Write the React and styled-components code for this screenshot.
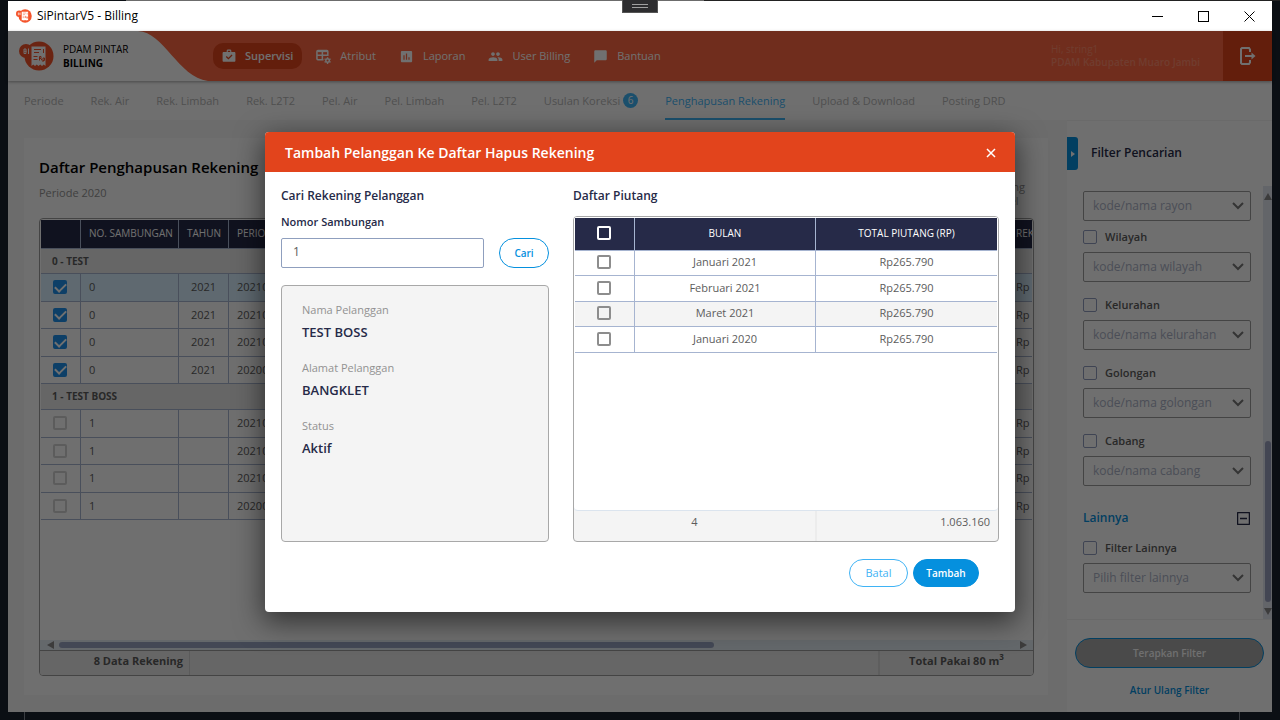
import React from "react";
import styled, { createGlobalStyle, css } from "styled-components";
import { MdPoll, MdPeople, MdChatBubble } from "react-icons/md";

const c = {
  navy: "#262a48",
  blue: "#0590de",
  sky: "#3fb3f5",
  orange: "#ff6842",
  deep: "#e2441c",
  line: "#a6b4d0",
  text: "#5c5c5c",
  muted: "#929292",
};

const Global = createGlobalStyle`
  * { box-sizing: border-box; }
  body { margin: 0; background: #0b0f14; font-family: "Open Sans", "Noto Sans", sans-serif; font-size: 12px; line-height: 16px; color: ${c.text}; }
  button, input, select { font: inherit; color: inherit; margin: 0; }
  h1, h2, h3, p, dl, dd { margin: 0; }
`;

/* Desktop and window frame */
const Desktop = styled.div`
  min-height: 100vh;
  display: flex;
  flex-direction: column;
  padding: 0 8px;
`;
const TopEdge = styled.div`
  height: 1px;
  margin: 0 -8px;
  background: linear-gradient(90deg, #0b0f14 126px, #6c6c6c 126px, #6c6c6c 55%, #222 55%);
`;
const BottomEdge = styled.div`
  height: 8px;
  margin: 0 32px 0 16px;
  border: solid #3a3d42;
  border-width: 0 1px;
`;
const DebugTab = styled.div`
  position: absolute;
  top: 0;
  left: 50%;
  width: 36px;
  height: 13px;
  margin-left: -18px;
  background: #2d2d2f;
  border: 1px solid #555;
  border-top: 0;
  display: flex;
  flex-direction: column;
  align-items: center;
  justify-content: center;
  gap: 2px;
  span { width: 16px; height: 1px; background: #a0a0a0; }
`;
const Window = styled.div`
  flex: 1;
  display: flex;
  flex-direction: column;
  background: #fff;
`;
const TitleBar = styled.div`
  height: 30px;
  display: flex;
  align-items: center;
  padding: 0 0 0 8px;
  gap: 5px;
  font-size: 12px;
  color: #000;
`;
const TitleText = styled.span`
  flex: 1;
`;
const WinButtons = styled.div`
  display: flex;
`;
const WinButton = styled.button`
  width: 46px;
  height: 30px;
  border: 0;
  padding: 0;
  background: none;
  display: grid;
  place-items: center;
`;
const Client = styled.div`
  position: relative;
  flex: 1;
  display: flex;
  flex-direction: column;
`;

/* Header */
const Header = styled.header`
  height: 50px;
  display: flex;
  background: ${c.orange};
  box-shadow: 0 1px 3px rgba(0, 0, 0, 0.35);
  z-index: 1;
`;
const Brand = styled.div`
  width: 130px;
  display: flex;
  align-items: center;
  gap: 9px;
  padding-left: 11px;
  background: #fff;
  color: #000;
  font-size: 10px;
  line-height: 14px;
`;
const Wave = styled.svg`
  width: 70px;
  height: 50px;
  margin-right: 5px;
`;
const Nav = styled.nav`
  flex: 1;
  display: flex;
  align-items: center;
  gap: 5px;
`;
const NavLink = styled.a`
  height: 26px;
  display: flex;
  align-items: center;
  gap: 9px;
  padding: 0 9px;
  border-radius: 10px;
  color: #fff;
  text-decoration: none;
  font-size: 11px;
  background: ${(p) => (p.$active ? c.deep : "none")};
  font-weight: ${(p) => (p.$active ? 600 : 400)};
`;
const Greeting = styled.div`
  width: 172px;
  align-self: center;
  font-size: 10px;
  line-height: 13px;
  color: #ff8a6c;
  strong { font-weight: 600; }
`;
const Logout = styled.button`
  width: 49px;
  border: 0;
  padding: 0;
  background: ${c.deep};
  color: #fff;
  display: grid;
  place-items: center;
`;

/* Tabs */
const Tabs = styled.nav`
  height: 39px;
  display: flex;
  gap: 27px;
  padding-left: 16px;
  background: #fdfdfd;
`;
const Tab = styled.a`
  display: flex;
  align-items: center;
  gap: 3px;
  font-size: 11px;
  text-decoration: none;
  white-space: nowrap;
  color: ${(p) => (p.$active ? c.sky : "#b4b4b4")};
  border-top: 2px solid transparent;
  border-bottom: 2px solid ${(p) => (p.$active ? c.sky : "transparent")};
`;
const Badge = styled.span`
  width: 15px;
  height: 15px;
  border-radius: 50%;
  background: ${c.sky};
  color: #fff;
  font-size: 10px;
  line-height: 15px;
  text-align: center;
`;

/* Main page */
const Body = styled.div`
  flex: 1;
  display: flex;
  background: #f5f5f5;
`;
const Main = styled.main`
  flex: 1;
  min-width: 0;
  display: flex;
  padding: 18px 19px 17px 16px;
`;
const Card = styled.section`
  flex: 1;
  min-width: 0;
  display: flex;
  flex-direction: column;
  background: #fdfdfd;
  padding: 19px 14px 19px 15px;
`;
const CardHead = styled.div`
  height: 61px;
  display: flex;
  justify-content: space-between;
`;
const PageTitle = styled.h1`
  font-size: 15px;
  line-height: 20px;
  font-weight: 600;
  color: #000;
`;
const Subtitle = styled.p`
  margin-top: 8px;
  font-size: 11px;
  color: ${c.muted};
`;
const ToolButton = styled.button`
  align-self: flex-end;
  border: 0;
  background: none;
  padding: 0 9px 10px;
  font-size: 11px;
  line-height: 14px;
  color: ${c.muted};
`;
const Grid = styled.div`
  flex: 1;
  display: flex;
  flex-direction: column;
  border: 1px solid #9c9c9c;
  border-radius: 4px;
  overflow: hidden;
  background: #fdfdfd;
`;
const GridView = styled.div`
  flex: 1;
  padding: 1px 1px 0;
`;
const RekTable = styled.table`
  width: 100%;
  table-layout: fixed;
  border-collapse: separate;
  border-spacing: 0;
  font-size: 11px;
  th, td {
    padding: 0 8px 1px;
    border-right: 1px solid ${c.line};
    border-bottom: 1px solid ${c.line};
    overflow: hidden;
    white-space: nowrap;
    text-align: left;
  }
  th:last-child, td:last-child { border-right: 0; padding-right: 0; }
  thead th {
    height: 29px;
    padding-bottom: 2px;
    background: ${c.navy};
    color: #fff;
    font-size: 10px;
    font-weight: 400;
  }
  td { height: 27px; }
  tr:nth-child(even) td { height: 28px; }
  td:first-child { padding: 0 1px 1px 0; }
  td:nth-child(3) { text-align: center; }
`;
const GroupCell = styled.th`
  && {
    height: ${(p) => (p.$first ? 25 : 26)}px;
    padding-left: 11px;
    background: #e8e8e8;
    font-size: 10px;
    font-weight: 700;
  }
`;
const Row = styled.tr`
  background: ${(p) => (p.$selected ? "#d8f0ff" : "none")};
`;
const Check = styled.input.attrs({ type: "checkbox" })`
  && { margin: ${(p) => (p.$thin ? "0" : "0 auto")}; }
  appearance: none;
  display: grid;
  place-items: center;
  flex: none;
  width: 14px;
  height: 14px;
  border: ${(p) => (p.$thin ? 1 : 2)}px solid ${(p) => p.$color || "#8d8d8d"};
  border-radius: 2px;
  &:checked {
    background: #1e90ea;
    border-color: #1e90ea;
  }
  &:checked::after {
    content: "";
    width: 9px;
    height: 5px;
    border: solid #fff;
    border-width: 0 0 2px 2px;
    transform: translateY(-1px) rotate(-45deg);
  }
`;
const HScroll = styled.div`
  height: 10px;
  display: flex;
  align-items: center;
  padding: 0 6px 0 7px;
  gap: 5px;
  background: #e4edf4;
`;
const Track = styled.div`
  flex: 1;
`;
const HThumb = styled.div`
  width: 68.5%;
  height: 6px;
  border-radius: 3px;
  background: #9aa4c2;
`;
const Arrow = styled.span`
  width: 0;
  height: 0;
  border: 4px solid transparent;
  ${(p) => p.$dir === "left" && css`border-right: 7px solid #888; border-left: 0;`}
  ${(p) => p.$dir === "right" && css`border-left: 7px solid #888; border-right: 0;`}
  ${(p) => p.$dir === "up" && css`border-bottom: 7px solid #888; border-top: 0;`}
  ${(p) => p.$dir === "down" && css`border-top: 7px solid #888; border-bottom: 0;`}
`;
const GridFoot = styled.div`
  height: 25px;
  display: flex;
  justify-content: space-between;
  border-top: 1px solid #9c9c9c;
  background: #e9e9e9;
  font-size: 11px;
  font-weight: 700;
  line-height: 20px;
  sup { font-size: 8px; line-height: 8px; }
`;
const FootLeft = styled.span`
  width: 150px;
  padding-right: 6px;
  text-align: right;
  border-right: 1px solid #cfcfcf;
`;
const FootRight = styled.span`
  width: 155px;
  text-align: center;
  border-left: 2px solid #d6d6d6;
`;

/* Filter panel */
const Side = styled.aside`
  width: 205px;
  display: flex;
  flex-direction: column;
  background: #fdfdfd;
  border-top: 1px solid #f2f2f2;
`;
const SideHead = styled.div`
  height: 65px;
  padding-top: 16px;
  display: flex;
  gap: 13px;
`;
const Toggle = styled.button`
  width: 11px;
  height: 33px;
  border: 0;
  padding: 0;
  background: ${c.blue};
  border-radius: 0 3px 3px 0;
  display: grid;
  place-items: center;
`;
const SideTitle = styled.h2`
  font-size: 12px;
  line-height: 32px;
  font-weight: 600;
  color: ${c.navy};
`;
const SideScroll = styled.div`
  flex: 1;
  display: flex;
  border-bottom: 1px solid #efefef;
`;
const Fields = styled.div`
  flex: 1;
  padding: 5px 12px 0 16px;
`;
const Field = styled.div`
  display: flex;
  flex-direction: column;
  gap: 7px;
  margin-bottom: ${(p) => (p.$tight ? 8 : 15)}px;
`;
const CheckLabel = styled.label`
  height: 16px;
  display: flex;
  align-items: center;
  gap: 8px;
  font-size: 11px;
  font-weight: 600;
`;
const SelectBox = styled.div`
  display: grid;
  align-items: center;
  select, svg { grid-area: 1 / 1; }
  svg { justify-self: end; margin-right: 7px; pointer-events: none; }
`;
const Select = styled.select`
  appearance: none;
  width: 100%;
  height: 30px;
  padding: 0 9px;
  border: 1px solid #9c9c9c;
  border-radius: 2px;
  background: transparent;
  color: #abb2c6;
  font-size: 12px;
`;
const SectionHead = styled.div`
  height: 34px;
  margin-top: 14px;
  display: flex;
  align-items: center;
  justify-content: space-between;
  margin-bottom: 5px;
`;
const SectionTitle = styled.h3`
  font-size: 12px;
  font-weight: 600;
  color: ${c.blue};
`;
const IconButton = styled.button`
  border: 0;
  padding: 0 1px 0 0;
  background: none;
  display: grid;
  color: ${(p) => p.$color || "inherit"};
`;
const VScroll = styled.div`
  width: 9px;
  display: flex;
  flex-direction: column;
  align-items: center;
  justify-content: space-between;
  padding: 7px 0 4px;
  background: #e2e5f0;
`;
const VTrack = styled.div`
  flex: 1;
  display: flex;
  align-items: flex-end;
  padding-bottom: 6px;
`;
const VThumb = styled.div`
  width: 6px;
  height: 40%;
  border-radius: 3px;
  background: #9aa0bd;
`;
const SideFoot = styled.div`
  height: 92px;
  padding: 18px 8px 0;
  display: flex;
  flex-direction: column;
  align-items: center;
  gap: 14px;
  font-size: 10px;
  font-weight: 600;
`;
const Apply = styled.button`
  width: 100%;
  height: 30px;
  border: 1px solid ${c.blue};
  border-radius: 15px;
  background: #a8a8a8;
  color: #fdfdfd;
`;
const Reset = styled.a`
  color: ${c.blue};
  text-decoration: none;
`;

/* Dialog */
const Overlay = styled.div`
  position: absolute;
  inset: 0;
  z-index: 2;
  display: grid;
  place-items: center;
  background: rgba(0, 0, 0, 0.56);
`;
const Dialog = styled.div`
  width: 750px;
  max-width: 100%;
  border-radius: 4px;
  background: #fff;
  overflow: hidden;
  box-shadow: 0 8px 28px 2px rgba(0, 0, 0, 0.55);
  color: ${c.navy};
`;
const DialogHead = styled.div`
  height: 40px;
  padding: 2px 18px 0 20px;
  display: flex;
  align-items: center;
  justify-content: space-between;
  background: ${c.deep};
  color: #fff;
`;
const DialogTitle = styled.h2`
  font-size: 14px;
  line-height: 20px;
  font-weight: 600;
`;
const DialogBody = styled.div`
  padding: 15px 16px 0;
  display: grid;
  grid-template-columns: 268fr 426fr;
  gap: 24px;
`;
const Column = styled.div`
  display: flex;
  flex-direction: column;
`;
const Heading = styled.h3`
  font-size: 12px;
  line-height: 18px;
  font-weight: 600;
`;
const SearchLabel = styled.label`
  margin: 9px 0;
  font-size: 11px;
  line-height: 15px;
  font-weight: 600;
`;
const SearchRow = styled.div`
  display: flex;
  gap: 15px;
  margin-bottom: 17px;
`;
const TextBox = styled.input`
  flex: 1;
  min-width: 0;
  height: 30px;
  padding: 0 11px 2px;
  border: 1px solid #8f9fbe;
  border-radius: 2px;
  color: ${c.text};
`;
const Pill = styled.button`
  height: ${(p) => (p.$search ? 30 : 28)}px;
  width: ${(p) => p.$w}px;
  padding: 0;
  border-radius: 15px;
  border: 1px solid ${(p) => p.$color};
  background: ${(p) => (p.$solid ? p.$color : "#fff")};
  color: ${(p) => (p.$solid ? "#fff" : p.$color)};
  font-size: ${(p) => (p.$large ? 11 : 10)}px;
  font-weight: ${(p) => (p.$large ? 400 : 600)};
`;
const Info = styled.dl`
  flex: 1;
  padding: 16px 20px;
  border: 1px solid #a8a8a8;
  border-radius: 4px;
  background: #f4f4f4;
  dt { font-size: 11px; line-height: 16px; color: ${c.muted}; }
  dd { font-size: 13px; line-height: 18px; font-weight: 600; margin: 5px 0 19px; }
`;
const DebtBox = styled.div`
  height: 326px;
  margin-top: 11px;
  display: flex;
  flex-direction: column;
  border: 1px solid #a8a8a8;
  border-radius: 4px;
  background: #f4f4f4;
  overflow: hidden;
`;
const DebtView = styled.div`
  flex: 1;
  padding: 1px 1px 0;
  background: #fff;
  border-bottom: 1px solid #dbe4ee;
  border-radius: 0 0 4px 4px;
`;
const DebtTable = styled.table`
  width: 100%;
  table-layout: fixed;
  border-collapse: separate;
  border-spacing: 0;
  color: ${c.text};
  font-size: 11px;
  th, td {
    padding: 0 0 1px;
    text-align: center;
    border-bottom: 1px solid ${c.line};
    border-right: 1px solid ${c.line};
  }
  th:last-child, td:last-child { border-right: 0; }
  th:first-child, td:first-child { padding-right: 1px; }
  th {
    height: 33px;
    background: ${c.navy};
    color: #fff;
    font-size: 10px;
    font-weight: 400;
  }
  td { height: 25px; }
  tr:nth-child(even) td { height: 26px; }
`;
const DebtRow = styled.tr`
  background: ${(p) => (p.$shade ? "#f4f4f4" : "none")};
`;
const DebtFoot = styled.div`
  height: 30px;
  display: flex;
  color: ${c.text};
  font-size: 11px;
  line-height: 21px;
`;
const DebtCount = styled.span`
  width: 243px;
  text-align: center;
  border-right: 2px solid #ececec;
`;
const DebtSum = styled.span`
  flex: 1;
  padding-right: 8px;
  text-align: right;
`;
const Actions = styled.div`
  display: flex;
  justify-content: flex-end;
  gap: 5px;
  padding: 17px 36px 25px 0;
`;

const Logo = ({ w, h }) => (
  <svg width={w} height={h} viewBox="0 0 35 30" aria-hidden="true">
    <circle cx="20" cy="15" r="14.500" fill="#f4532a" />
    <circle cx="7" cy="10" r="7" fill="#f4532a" />
    <path d="M12.500 5.500h14v19.500l-1.750-1.500-1.750 1.500-1.750-1.500-1.750 1.500-1.750-1.500-1.750 1.500-1.750-1.500-1.750 1.500z" fill="#fff" />
    <path d="M15 8.500h7M15 11.500h5M24.500 8v4M14.500 15.500h4M14.500 18.500h4" stroke="#f4532a" strokeWidth="1" fill="none" />
    <path d="M20.500 19.500v-4h1.500v2h-1.500M22 17.500l1 2M24 21v-4h1.500v2.500H24" stroke="#f4532a" strokeWidth="1" fill="none" />
    <path d="M5 8h2v4.500H5zM5 10.250h2.500M9.500 7.500v5.500" stroke="#fff" strokeWidth="1" fill="none" />
  </svg>
);
const BagCheck = () => (
  <svg width="14" height="14" viewBox="0 0 24 24" aria-hidden="true">
    <path fill="currentColor" fillRule="evenodd" d="M8 5V3.500C8 2 9 1 10.500 1h3C15 1 16 2 16 3.500V5h5c1.200 0 2 .8 2 2v13c0 1.200-.8 2-2 2H3c-1.200 0-2-.8-2-2V7c0-1.200.8-2 2-2zm2 0h4V3h-4zm1 13 7-7-1.600-1.600L11 14.800l-2.900-2.900L6.500 13.500z" />
  </svg>
);
const TableCog = () => (
  <svg width="15" height="15" viewBox="0 0 24 24" aria-hidden="true">
    <path fill="none" stroke="currentColor" strokeWidth="2.400" d="M12 17H3c-.8 0-1.500-.6-1.500-1.400V3.900C1.500 3 2.200 2.500 3 2.500h14.500c.8 0 1.400.6 1.400 1.400V11M1.500 10h17.400M10.200 4v13" />
    <path fill="currentColor" d="M2 2h17v3H2z" />
    <circle cx="18.500" cy="18.500" r="2.800" fill="none" stroke="currentColor" strokeWidth="2.400" />
    <path d="M18.500 13v2M18.500 22v2M13.700 15.800l1.700 1M21.600 20.200l1.700 1M13.700 21.200l1.700-1M21.600 16.800l1.700-1" stroke="currentColor" strokeWidth="2.200" />
  </svg>
);
const Chevron = () => (
  <svg width="12" height="8" viewBox="0 0 12 8" fill="none" stroke="#777" strokeWidth="2" aria-hidden="true">
    <path d="M1 1l5 5 5-5" />
  </svg>
);

const NAV = [
  ["Supervisi", BagCheck],
  ["Atribut", TableCog],
  ["Laporan", MdPoll],
  ["User Billing", MdPeople],
  ["Bantuan", MdChatBubble],
];
const TABS = ["Periode", "Rek. Air", "Rek. Limbah", "Rek. L2T2", "Pel. Air", "Pel. Limbah", "Pel. L2T2", "Usulan Koreksi", "Penghapusan Rekening", "Upload & Download", "Posting DRD"];
const GROUPS = [
  { name: "0 - TEST", no: "0", year: "2021", checked: true, periods: ["202101", "202102", "202103", "202001"] },
  { name: "1 - TEST BOSS", no: "1", year: "", checked: false, periods: ["202101", "202102", "202103", "202001"] },
];
const FILTERS = ["Wilayah", "Kelurahan", "Golongan", "Cabang"];
const DEBTS = ["Januari 2021", "Februari 2021", "Maret 2021", "Januari 2020"];

function FilterSelect({ text }) {
  return (
    <SelectBox>
      <Select aria-label={text} defaultValue="">
        <option value="">{text}</option>
      </Select>
      <Chevron />
    </SelectBox>
  );
}

function FilterField({ label, placeholder }) {
  return (
    <Field>
      <CheckLabel>
        <Check $thin $color="#8f9bbd" />
        {label}
      </CheckLabel>
      <FilterSelect text={placeholder} />
    </Field>
  );
}

function RekeningTable() {
  return (
    <RekTable>
      <colgroup>
        <col style={{ width: 40 }} />
        <col style={{ width: 98 }} />
        <col style={{ width: 50 }} />
        <col />
        <col style={{ width: 24 }} />
      </colgroup>
      <thead>
        <tr>
          <th aria-label="Pilih" />
          <th>NO. SAMBUNGAN</th>
          <th>TAHUN</th>
          <th>PERIODE</th>
          <th>REK</th>
        </tr>
      </thead>
      {GROUPS.map((g, gi) => (
        <tbody key={g.name}>
          <tr>
            <GroupCell colSpan={5} $first={gi === 0}>{g.name}</GroupCell>
          </tr>
          {g.periods.map((p, i) => (
            <Row key={p} $selected={gi === 0 && i === 0}>
              <td>
                <Check aria-label={`${g.name} ${p}`} defaultChecked={g.checked} disabled={!g.checked} $color="#d2d2d2" />
              </td>
              <td>{g.no}</td>
              <td>{g.year}</td>
              <td>{p}</td>
              <td>Rp</td>
            </Row>
          ))}
        </tbody>
      ))}
    </RekTable>
  );
}

function AddDialog() {
  return (
    <Dialog role="dialog" aria-labelledby="dialog-title">
      <DialogHead>
        <DialogTitle id="dialog-title">Tambah Pelanggan Ke Daftar Hapus Rekening</DialogTitle>
        <IconButton aria-label="Tutup">
          <svg width="10" height="10" viewBox="0 0 10 10" stroke="currentColor" strokeWidth="1.500">
            <path d="M1 1l8 8M9 1L1 9" />
          </svg>
        </IconButton>
      </DialogHead>
      <DialogBody>
        <Column>
          <Heading>Cari Rekening Pelanggan</Heading>
          <SearchLabel htmlFor="nomor">Nomor Sambungan</SearchLabel>
          <SearchRow>
            <TextBox id="nomor" defaultValue="1" />
            <Pill $search $w={50} $color={c.blue}>Cari</Pill>
          </SearchRow>
          <Info>
            <dt>Nama Pelanggan</dt>
            <dd>TEST BOSS</dd>
            <dt>Alamat Pelanggan</dt>
            <dd>BANGKLET</dd>
            <dt>Status</dt>
            <dd>Aktif</dd>
          </Info>
        </Column>
        <Column>
          <Heading>Daftar Piutang</Heading>
          <DebtBox>
            <DebtView>
              <DebtTable>
                <colgroup>
                  <col style={{ width: 60 }} />
                  <col />
                  <col />
                </colgroup>
                <thead>
                  <tr>
                    <th><Check aria-label="Pilih semua" $color="#fff" /></th>
                    <th>BULAN</th>
                    <th>TOTAL PIUTANG (RP)</th>
                  </tr>
                </thead>
                <tbody>
                  {DEBTS.map((d, i) => (
                    <DebtRow key={d} $shade={i === 2}>
                      <td><Check aria-label={d} /></td>
                      <td>{d}</td>
                      <td>Rp265.790</td>
                    </DebtRow>
                  ))}
                </tbody>
              </DebtTable>
            </DebtView>
            <DebtFoot>
              <DebtCount>4</DebtCount>
              <DebtSum>1.063.160</DebtSum>
            </DebtFoot>
          </DebtBox>
        </Column>
      </DialogBody>
      <Actions>
        <Pill $w={59} $large $color={c.sky}>Batal</Pill>
        <Pill $w={66} $solid $color={c.blue}>Tambah</Pill>
      </Actions>
    </Dialog>
  );
}

export default function App() {
  return (
    <Desktop>
      <Global />
      <TopEdge />
      <Window>
        <TitleBar>
          <Logo w={16} h={14} />
          <TitleText>SiPintarV5 - Billing</TitleText>
          <WinButtons>
            <WinButton aria-label="Minimize">
              <svg width="11" height="11" stroke="#000"><path d="M0 5.500h11" /></svg>
            </WinButton>
            <WinButton aria-label="Maximize">
              <svg width="11" height="11" stroke="#000" fill="none"><rect x=".5" y=".5" width="10" height="10" /></svg>
            </WinButton>
            <WinButton aria-label="Close">
              <svg width="11" height="11" stroke="#000"><path d="M.5.5l10 10M10.500.5l-10 10" /></svg>
            </WinButton>
          </WinButtons>
        </TitleBar>
        <Client>
          <Header>
            <Brand>
              <Logo w={35} h={30} />
              <div>
                PDAM PINTAR
                <br />
                <b>BILLING</b>
              </div>
            </Brand>
            <Wave viewBox="0 0 70 50" aria-hidden="true">
              <path d="M0 0C26 1 40 46 70 50H0z" fill="#fff" />
            </Wave>
            <Nav>
              {NAV.map(([label, Icon], i) => (
                <NavLink key={label} href="#" $active={i === 0}>
                  <Icon size={15} />
                  {label}
                </NavLink>
              ))}
            </Nav>
            <Greeting>
              Hi, string1
              <br />
              <strong>PDAM Kabupaten Muaro Jambi</strong>
            </Greeting>
            <Logout aria-label="Keluar">
              <svg width="16" height="18" viewBox="0 0 16 18" fill="none" stroke="currentColor" strokeWidth="2">
                <path d="M10 5V2.500L9 1H2L1 2v14l1 1h7l1-1.500V13M5 9h8" />
                <path d="M11.500 5.500L15.500 9l-4 3.500z" fill="currentColor" stroke="none" />
              </svg>
            </Logout>
          </Header>
          <Tabs>
            {TABS.map((t) => (
              <Tab key={t} href="#" $active={t === "Penghapusan Rekening"}>
                {t}
                {t === "Usulan Koreksi" && <Badge>6</Badge>}
              </Tab>
            ))}
          </Tabs>
          <Body>
            <Main>
              <Card>
                <CardHead>
                  <div>
                    <PageTitle>Daftar Penghapusan Rekening</PageTitle>
                    <Subtitle>Periode 2020</Subtitle>
                  </div>
                  <ToolButton>
                    Piutang
                    <br />
                    Excel
                  </ToolButton>
                </CardHead>
                <Grid>
                  <GridView>
                    <RekeningTable />
                  </GridView>
                  <HScroll>
                    <Arrow $dir="left" />
                    <Track><HThumb /></Track>
                    <Arrow $dir="right" />
                  </HScroll>
                  <GridFoot>
                    <FootLeft>8 Data Rekening</FootLeft>
                    <FootRight>Total Pakai 80 m<sup>3</sup></FootRight>
                  </GridFoot>
                </Grid>
              </Card>
            </Main>
            <Side>
              <SideHead>
                <Toggle aria-label="Sembunyikan filter">
                  <svg width="4" height="6"><path d="M0 0l4 3-4 3z" fill="#fff" /></svg>
                </Toggle>
                <SideTitle>Filter Pencarian</SideTitle>
              </SideHead>
              <SideScroll>
                <Fields>
                  <Field $tight><FilterSelect text="kode/nama rayon" /></Field>
                  {FILTERS.map((f) => (
                    <FilterField key={f} label={f} placeholder={`kode/nama ${f.toLowerCase()}`} />
                  ))}
                  <SectionHead>
                    <SectionTitle>Lainnya</SectionTitle>
                    <IconButton aria-label="Ciutkan" $color={c.navy}>
                      <svg width="13" height="13" fill="none" stroke="currentColor"><rect x=".5" y=".5" width="12" height="12" rx="1" strokeWidth="1.500" /><path d="M3 6.500h7" strokeWidth="1.500" /></svg>
                    </IconButton>
                  </SectionHead>
                  <FilterField label="Filter Lainnya" placeholder="Pilih filter lainnya" />
                </Fields>
                <VScroll>
                  <Arrow $dir="up" />
                  <VTrack><VThumb /></VTrack>
                  <Arrow $dir="down" />
                </VScroll>
              </SideScroll>
              <SideFoot>
                <Apply>Terapkan Filter</Apply>
                <Reset href="#">Atur Ulang Filter</Reset>
              </SideFoot>
            </Side>
          </Body>
          <Overlay>
            <AddDialog />
          </Overlay>
        </Client>
      </Window>
      <BottomEdge />
      <DebugTab><span /><span /></DebugTab>
    </Desktop>
  );
}
